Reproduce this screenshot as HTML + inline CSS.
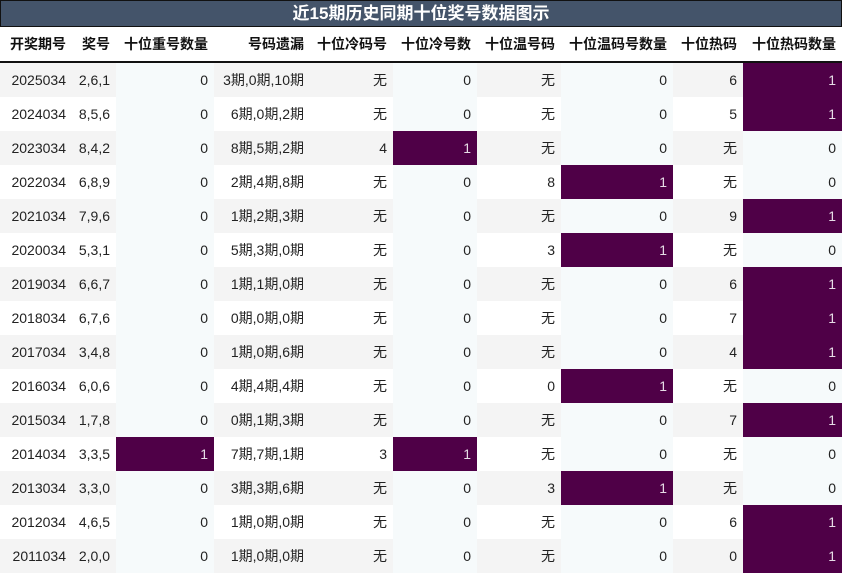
<!DOCTYPE html>
<html><head><meta charset="utf-8"><style>
body{margin:0;width:842px;height:574px;overflow:hidden;background:#fff;font-family:"Liberation Sans","Noto Sans CJK SC",sans-serif;}
.t{position:absolute;left:0;top:0;width:840px;height:25px;background:#44546a;border:1px solid #111;color:#fff;font-weight:bold;font-size:17px;text-align:center;line-height:25px;}
table{position:absolute;left:0;top:27px;border-collapse:collapse;table-layout:fixed;width:842px;font-size:14px;color:#222;}
th{height:34px;font-weight:bold;font-size:14px;text-align:right;padding:0 6px 0 0;border-bottom:2px solid #111;color:#111;white-space:nowrap;}
td{height:34px;text-align:right;padding:0 6px 0 0;white-space:nowrap;}
tr.o td{background:#f4f4f4;}
tr td.c{background:#f6fafb;}
tr td.p{background:#4f0047;color:#e6dce6;}
</style></head><body>
<div class="t">近15期历史同期十位奖号数据图示</div>
<table>
<colgroup><col style="width:72px"><col style="width:44px"><col style="width:98px"><col style="width:96px"><col style="width:83px"><col style="width:84px"><col style="width:84px"><col style="width:112px"><col style="width:70px"><col style="width:99px"></colgroup>
<tr><th>开奖期号</th><th>奖号</th><th>十位重号数量</th><th>号码遗漏</th><th>十位冷码号</th><th>十位冷号数</th><th>十位温号码</th><th>十位温码号数量</th><th>十位热码</th><th>十位热码数量</th></tr>
<tr class="o"><td>2025034</td><td>2,6,1</td><td class="c">0</td><td>3期,0期,10期</td><td>无</td><td class="c">0</td><td>无</td><td class="c">0</td><td>6</td><td class="p">1</td></tr>
<tr><td>2024034</td><td>8,5,6</td><td class="c">0</td><td>6期,0期,2期</td><td>无</td><td class="c">0</td><td>无</td><td class="c">0</td><td>5</td><td class="p">1</td></tr>
<tr class="o"><td>2023034</td><td>8,4,2</td><td class="c">0</td><td>8期,5期,2期</td><td>4</td><td class="p">1</td><td>无</td><td class="c">0</td><td>无</td><td class="c">0</td></tr>
<tr><td>2022034</td><td>6,8,9</td><td class="c">0</td><td>2期,4期,8期</td><td>无</td><td class="c">0</td><td>8</td><td class="p">1</td><td>无</td><td class="c">0</td></tr>
<tr class="o"><td>2021034</td><td>7,9,6</td><td class="c">0</td><td>1期,2期,3期</td><td>无</td><td class="c">0</td><td>无</td><td class="c">0</td><td>9</td><td class="p">1</td></tr>
<tr><td>2020034</td><td>5,3,1</td><td class="c">0</td><td>5期,3期,0期</td><td>无</td><td class="c">0</td><td>3</td><td class="p">1</td><td>无</td><td class="c">0</td></tr>
<tr class="o"><td>2019034</td><td>6,6,7</td><td class="c">0</td><td>1期,1期,0期</td><td>无</td><td class="c">0</td><td>无</td><td class="c">0</td><td>6</td><td class="p">1</td></tr>
<tr><td>2018034</td><td>6,7,6</td><td class="c">0</td><td>0期,0期,0期</td><td>无</td><td class="c">0</td><td>无</td><td class="c">0</td><td>7</td><td class="p">1</td></tr>
<tr class="o"><td>2017034</td><td>3,4,8</td><td class="c">0</td><td>1期,0期,6期</td><td>无</td><td class="c">0</td><td>无</td><td class="c">0</td><td>4</td><td class="p">1</td></tr>
<tr><td>2016034</td><td>6,0,6</td><td class="c">0</td><td>4期,4期,4期</td><td>无</td><td class="c">0</td><td>0</td><td class="p">1</td><td>无</td><td class="c">0</td></tr>
<tr class="o"><td>2015034</td><td>1,7,8</td><td class="c">0</td><td>0期,1期,3期</td><td>无</td><td class="c">0</td><td>无</td><td class="c">0</td><td>7</td><td class="p">1</td></tr>
<tr><td>2014034</td><td>3,3,5</td><td class="p">1</td><td>7期,7期,1期</td><td>3</td><td class="p">1</td><td>无</td><td class="c">0</td><td>无</td><td class="c">0</td></tr>
<tr class="o"><td>2013034</td><td>3,3,0</td><td class="c">0</td><td>3期,3期,6期</td><td>无</td><td class="c">0</td><td>3</td><td class="p">1</td><td>无</td><td class="c">0</td></tr>
<tr><td>2012034</td><td>4,6,5</td><td class="c">0</td><td>1期,0期,0期</td><td>无</td><td class="c">0</td><td>无</td><td class="c">0</td><td>6</td><td class="p">1</td></tr>
<tr class="o"><td>2011034</td><td>2,0,0</td><td class="c">0</td><td>1期,0期,0期</td><td>无</td><td class="c">0</td><td>无</td><td class="c">0</td><td>0</td><td class="p">1</td></tr>
</table>
</body></html>
